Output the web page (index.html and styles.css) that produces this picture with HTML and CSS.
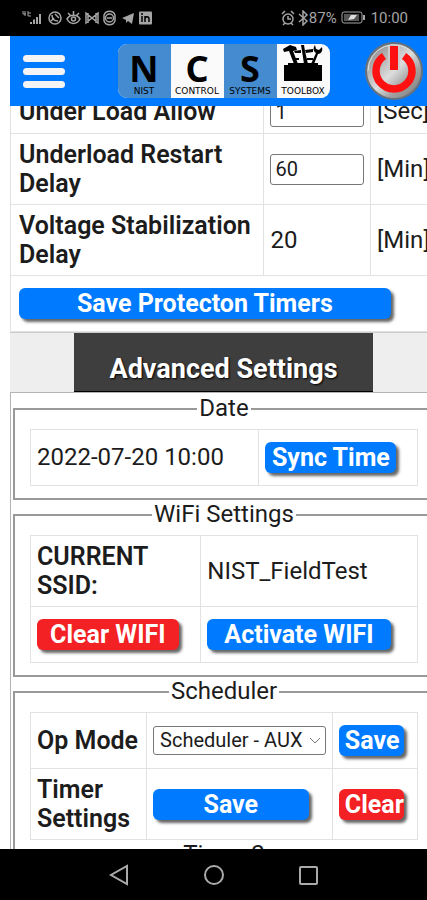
FILE: index.html
```html
<!DOCTYPE html>
<html lang="en">
<head>
<meta charset="utf-8">
<meta name="viewport" content="width=device-width, initial-scale=1">
<title>NIST Control Systems Toolbox</title>
<link rel="stylesheet" href="styles.css">
</head>
<body>
<div class="status">
  <svg class="status-left" width="132" height="16" viewBox="0 0 132 16" fill="none" stroke="#a5a5a5" stroke-width="1.5" aria-hidden="true">
    <path d="M1 1v3h3M3 1v5M6 1v5h3M6 3h3" stroke-width="1"/>
    <path d="M9 14v-2M12 14V9.500M15 14V7M18 14V4" stroke-width="2"/>
    <circle cx="33" cy="8" r="6"/><path d="M30 5c0 4 2 6 6 6M29 11l3-3M33 4l4 4"/>
    <path d="M45 9c3-5 10-5 13 0-3 6-10 6-13 0zM46 3l3 3M51.500 1v4M57 3l-3 3"/><circle cx="51.500" cy="9" r="2"/>
    <path d="M64 13V3l6 5 6-5v10l-6-5zM66 3v10M74 3v10"/>
    <circle cx="87.500" cy="8" r="4"/><path d="M82 5c2-5 9-5 11 0M82 11c2 5 9 5 11 0M82 5v6M93 5v6M85 8h5"/>
    <path d="M100 8l12-5-2 11-4-3-2 2v-3z" fill="#a5a5a5" stroke="none"/>
    <rect x="117" y="1.500" width="13" height="13" rx="1" fill="#a5a5a5" stroke="none"/>
    <path d="M120 6v6M123 12V6M123 9c0-3 4-3 4 0v3M120 3v2" stroke="#000"/>
  </svg>
  <div class="status-right">
    <svg width="28" height="16" viewBox="0 0 28 16" fill="none" stroke="#a5a5a5" stroke-width="1.500" aria-hidden="true">
      <circle cx="7" cy="9" r="5"/><path d="M7 6v3h3M1 4l3-3M13 4l-3-3M4 13l-2 2M10 13l2 2"/>
      <path d="M18 4l8 7-4 4V1l4 4-8 7"/>
    </svg>
    <span>87%</span>
    <svg class="battery" width="25" height="14" viewBox="0 0 25 14" fill="none" stroke="#a5a5a5" aria-hidden="true">
      <rect x="1" y="1" width="20" height="11" rx="2"/><path d="M23 4v5" stroke-width="2"/>
      <rect x="3" y="3" width="15" height="7" fill="#555" stroke="none"/>
      <path d="M7 9l3-5h6l-3 4z" fill="#ddd" stroke="none"/>
    </svg>
    <span>10:00</span>
  </div>
</div>

<div class="screen">
  <header class="topbar">
    <button class="menu" aria-label="Menu"><span></span><span></span><span></span></button>
    <div class="logo">
      <div class="tile blue"><b>N</b><small>NIST</small></div>
      <div class="tile"><b>C</b><small>CONTROL</small></div>
      <div class="tile blue"><b>S</b><small>SYSTEMS</small></div>
      <div class="tile">
        <svg width="44" height="38" viewBox="0 0 44 38" aria-hidden="true">
          <path d="M3 21h4v-2h30v2h4v16H3z"/>
          <path d="M2 5l7-4 6 2 1 3-4 1 5 13h-4L8 7 3 8zM13 7l7-1v3h-6zM20 1h3l1 6 3 13h-4L21 7zM24 6l8-1v3l-7 1zM30 20l5-11c-3-2-3-5-1-8l1 4 3 1 3-3c1 4-1 7-4 7l-4 10z"/>
          <path d="M12 15h6M26 15h6" stroke="#000" stroke-width="2"/>
        </svg>
        <small>TOOLBOX</small>
      </div>
    </div>
    <button class="power" aria-label="Power">
      <svg width="60" height="60" viewBox="0 0 60 60" aria-hidden="true">
        <defs><linearGradient id="metal" x1="0" y1="0" x2="1" y2="1">
          <stop offset="0" stop-color="#777"/><stop offset=".3" stop-color="#b5b5b5"/><stop offset=".5" stop-color="#ddd"/><stop offset=".7" stop-color="#a0a0a0"/><stop offset="1" stop-color="#777"/>
        </linearGradient></defs>
        <circle cx="30" cy="30" r="28" fill="url(#metal)" stroke="#65717d" stroke-width="2"/>
        <path d="M4 30a26 26 0 0 1 45-18" fill="none" stroke="#e4e4e4"/>
        <path d="M20 15a18 18 0 1 0 20 0" fill="none" stroke="#f11" stroke-width="7.500"/>
        <path d="M30 5v24" stroke="#ccc" stroke-width="12"/>
        <path d="M30 5v24" stroke="#f11" stroke-width="8"/>
      </svg>
    </button>
  </header>

  <main>
    <table class="grid timers">
      <colgroup><col class="t-name"><col class="t-value"><col></colgroup>
      <tr><th><label for="allow">Under Load Allow</label></th><td><input id="allow" type="text" value="1"></td><td>[Sec]</td></tr>
      <tr><th><label for="restart">Underload Restart Delay</label></th><td><input id="restart" type="text" value="60"></td><td>[Min]</td></tr>
      <tr><th>Voltage Stabilization Delay</th><td>20</td><td>[Min]</td></tr>
      <tr><td colspan="3"><button class="btn">Save Protecton Timers</button></td></tr>
    </table>

    <div class="band"><button class="tab">Advanced Settings</button></div>

    <section class="advanced">
      <fieldset>
        <legend>Date</legend>
        <table class="grid">
          <colgroup><col class="d-time"><col></colgroup>
          <tr><td>2022-07-20 10:00</td><td><button class="btn">Sync Time</button></td></tr>
        </table>
      </fieldset>
      <fieldset>
        <legend>WiFi Settings</legend>
        <table class="grid">
          <colgroup><col class="w-name"><col></colgroup>
          <tr><th>CURRENT SSID:</th><td>NIST_FieldTest</td></tr>
          <tr><td><button class="btn red">Clear WIFI</button></td><td><button class="btn">Activate WIFI</button></td></tr>
        </table>
      </fieldset>
      <fieldset>
        <legend>Scheduler</legend>
        <table class="grid">
          <colgroup><col class="s-name"><col class="s-value"><col></colgroup>
          <tr><th><label for="mode">Op Mode</label></th>
            <td><div class="select"><select id="mode"><option>Scheduler - AUX</option></select>
              <svg width="12" height="8" viewBox="0 0 12 8" fill="none" stroke="#777" aria-hidden="true"><path d="M1 1l5 5 5-5"/></svg></div></td>
            <td><button class="btn">Save</button></td></tr>
          <tr><th>Timer Settings</th><td><button class="btn">Save</button></td><td><button class="btn red">Clear</button></td></tr>
        </table>
        <div class="timer-title">Timer 2</div>
      </fieldset>
    </section>
  </main>
</div>

<nav class="navbar" aria-label="System">
  <button aria-label="Back"><svg width="22" height="22" viewBox="0 0 22 22"><path d="M19 2v18L3 11z"/></svg></button>
  <button aria-label="Home"><svg width="22" height="22" viewBox="0 0 22 22"><circle cx="11" cy="11" r="9"/></svg></button>
  <button aria-label="Recent apps"><svg width="22" height="22" viewBox="0 0 22 22"><rect x="2" y="3" width="17" height="17" rx="1"/></svg></button>
</nav>
</body>
</html>
```
FILE: styles.css
```css
* { box-sizing: border-box; }

body {
  margin: 0;
  height: 100vh;
  display: flex;
  flex-direction: column;
  overflow: hidden;
  background: #fff;
  color: #1c1c1c;
  font: 24px/29px Roboto, sans-serif;
}

button, input, select { font: inherit; color: inherit; margin: 0; }
button { border: 0; padding: 0; background: none; }
svg { display: block; }

.status {
  flex: none;
  height: 36px;
  padding: 0 19px 0 22px;
  display: flex;
  align-items: center;
  justify-content: space-between;
  background: #000;
  color: #a5a5a5;
  font-size: 15px;
}
.status-right { display: flex; align-items: center; }
.battery { margin: 0 5px 0 4px; }

.screen {
  flex: 1;
  min-height: 0;
  margin-left: 10px;
  overflow: hidden;
}

.topbar {
  position: relative;
  z-index: 1;
  width: 100vw;
  height: 70px;
  padding: 0 13px;
  display: flex;
  align-items: center;
  justify-content: space-between;
  background: #007bff;
}
.menu {
  width: 60px;
  display: flex;
  flex-direction: column;
  gap: 6px;
}
.menu span { width: 42px; height: 7px; border-radius: 4px; background: #f4f4f4; }
.logo {
  display: flex;
  height: 54px;
  border-radius: 9px;
  overflow: hidden;
  background: #fafafa;
  color: #000;
}
.tile {
  width: 53px;
  display: flex;
  flex-direction: column;
  align-items: center;
  justify-content: space-between;
}
.tile.blue { background: #448bd0; }
.tile b { font: bold 36px/50px "Noto Sans", sans-serif; height: 39px; }
.tile small { font: 9px/13px "DejaVu Sans", sans-serif; }

main { width: 100vw; margin-top: -17px; }

.grid {
  width: 100%;
  border-collapse: collapse;
  table-layout: fixed;
}
.grid th, .grid td {
  padding: 6px;
  border: 1px solid #e2e2e2;
  text-align: left;
  vertical-align: middle;
}
.grid th { font-size: 25px; font-weight: 600; }
.timers { border-left: 1px solid #aaa; }
.grid.timers th, .grid.timers td[colspan] { padding-left: 8px; padding-right: 4px; }
.t-name { width: 59.5%; }
.t-value { width: 25%; }
.d-time { width: 59%; }
.w-name { width: 44%; }
.s-name { width: 30%; }
.s-value { width: 48%; }

input {
  display: block;
  width: 100%;
  height: 31px;
  padding: 0 4px;
  border: 1px solid #777;
  border-radius: 3px;
  background: #fff;
  font-size: 20px;
}

.btn {
  display: block;
  width: 90%;
  height: 31px;
  margin: 6px 0;
  padding: 0 6px;
  overflow: hidden;
  border-radius: 6px;
  background: #007bff;
  box-shadow: 3px 3px 3px #666;
  color: #fff;
  font-size: 25px;
  font-weight: 700;
  line-height: 29px;
  white-space: nowrap;
}
.btn.red { background: #f32024; }

.band {
  height: 60px;
  display: flex;
  justify-content: center;
  background: #eee;
  border-top: 1px solid #ccc;
}
.tab {
  width: 70%;
  padding-top: 14px;
  background: #3e3e3e;
  border-bottom: 1px solid #000;
  color: #fff;
  font-size: 27px;
  font-weight: 700;
  text-shadow: 1px 1px 2px #000;
}

.advanced { padding: 1px 2px 0; border: solid #b4b4b4; border-width: 1px 0 0 1px; }
fieldset {
  margin: 0;
  padding: 6px 15px 12px;
  border: 2px solid #999;
}
legend { margin: 0 auto; padding: 0 2px; }
legend, .timer-title { text-align: center; }

.select { position: relative; }
.select svg { position: absolute; right: 5px; top: 11px; }
select {
  display: block;
  width: 100%;
  height: 29px;
  padding: 0 6px;
  appearance: none;
  border: 1px solid #777;
  border-radius: 3px;
  background: #fff;
  font-size: 20px;
  line-height: 27px;
}

.navbar {
  flex: none;
  height: 51px;
  display: flex;
  align-items: center;
  justify-content: center;
  gap: 73px;
  background: #000;
}
.navbar svg { fill: none; stroke: #aaa; stroke-width: 2; }
```
